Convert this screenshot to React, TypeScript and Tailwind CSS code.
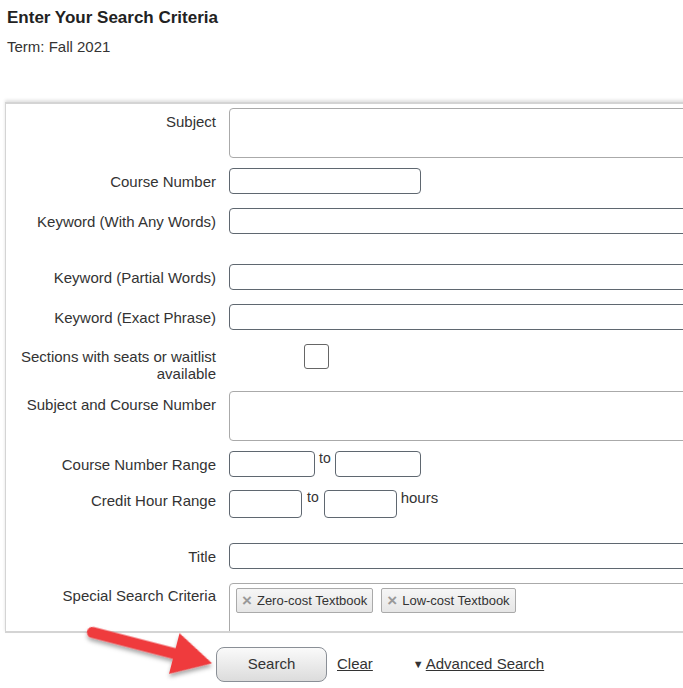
import React from 'react'

const font = { fontFamily: '"Liberation Sans", Arial, sans-serif' }

function Label({ children, top = 0 }: { children: React.ReactNode; top?: number }) {
  return (
    <div className="w-[210px] shrink-0 text-right text-[15px] leading-[17px] text-[#333]" style={{ paddingTop: top }}>
      {children}
    </div>
  )
}

function TextBox({ className = '' }: { className?: string }) {
  return <div className={`h-[26px] rounded-[4px] border border-[#5f6770] bg-white ${className}`} />
}

function Chip({ text }: { text: string }) {
  return (
    <div className="flex h-[25px] items-center gap-[5px] rounded-[2px] border border-[#aaa] bg-gradient-to-b from-[#f6f6f6] to-[#e6e6e6] px-[5px] text-[13px] text-[#333]">
      <span className="text-[17px] font-bold leading-none text-[#999]">×</span>
      <span>{text}</span>
    </div>
  )
}

export default function App() {
  return (
    <div className="relative h-[688px] w-[683px] overflow-hidden bg-white" style={font}>
      <h1 className="ml-[7px] pt-[8px] text-[17px] font-bold leading-[20px] text-[#222]">Enter Your Search Criteria</h1>
      <p className="ml-[7px] mt-[10px] text-[15px] leading-[17px] text-[#333]">Term: Fall 2021</p>

      <div className="ml-[5px] mt-[47px] h-[531px] w-[720px] overflow-hidden border-l border-t-2 border-b-2 border-[#d4d4d4] shadow-[0_-2px_3px_rgba(0,0,0,0.12)]">
        <div className="flex flex-col pt-[4px]">
          <div className="flex gap-[13px]">
            <Label top={5}>Subject</Label>
            <div className="h-[50px] flex-1 rounded-[4px] border border-[#aaa]" />
          </div>

          <div className="mt-[10px] flex items-center gap-[13px]">
            <Label>Course Number</Label>
            <TextBox className="w-[192px]" />
          </div>

          <div className="mt-[14px] flex items-center gap-[13px]">
            <Label>Keyword (With Any Words)</Label>
            <TextBox className="flex-1" />
          </div>

          <div className="mt-[30px] flex items-center gap-[13px]">
            <Label>Keyword (Partial Words)</Label>
            <TextBox className="flex-1" />
          </div>

          <div className="mt-[14px] flex items-center gap-[13px]">
            <Label>Keyword (Exact Phrase)</Label>
            <TextBox className="flex-1" />
          </div>

          <div className="mt-[14px] flex gap-[13px]">
            <Label top={4}>
              Sections with seats or waitlist
              <br />
              available
            </Label>
            <div className="ml-[75px] h-[25px] w-[25px] rounded-[3px] border border-[#666]" />
          </div>

          <div className="mt-[9px] flex gap-[13px]">
            <Label top={5}>Subject and Course Number</Label>
            <div className="h-[50px] flex-1 rounded-[4px] border border-[#aaa]" />
          </div>

          <div className="mt-[10px] flex gap-[13px]">
            <Label top={5}>Course Number Range</Label>
            <div className="flex items-start text-[#333]">
              <TextBox className="w-[86px]" />
              <span className="mx-[4px] text-[14px] leading-[15px]">to</span>
              <TextBox className="w-[86px]" />
            </div>
          </div>

          <div className="mt-[13px] flex gap-[13px]">
            <Label top={2}>Credit Hour Range</Label>
            <div className="flex items-start text-[#333]">
              <TextBox className="h-[28px] w-[73px]" />
              <span className="mx-[5px] text-[14px] leading-[15px]">to</span>
              <TextBox className="h-[28px] w-[73px]" />
              <span className="ml-[4px] text-[15px] leading-[15px]">hours</span>
            </div>
          </div>

          <div className="mt-[25px] flex items-center gap-[13px]">
            <Label>Title</Label>
            <TextBox className="flex-1" />
          </div>

          <div className="mt-[14px] flex gap-[13px]">
            <Label top={4}>Special Search Criteria</Label>
            <div className="flex h-[60px] flex-1 items-start gap-[8px] rounded-[4px] border border-[#aaa] pl-[6px] pt-[4px]">
              <Chip text="Zero-cost Textbook" />
              <Chip text="Low-cost Textbook" />
            </div>
          </div>
        </div>
      </div>

      <div className="ml-[216px] mt-[14px] flex items-center text-[15px] text-[#333]">
        <button className="h-[35px] w-[111px] rounded-[8px] border border-[#8a8f96] bg-gradient-to-b from-[#fafafa] to-[#dcdcdc] text-[15px] text-[#333]">
          Search
        </button>
        <a className="ml-[10px] underline">Clear</a>
        <a className="ml-[40px] flex items-center">
          <span className="mr-[2px] text-[11px]">▼</span>
          <span className="underline">Advanced Search</span>
        </a>
      </div>

      <svg className="absolute left-0 top-[600px]" width="240" height="88" viewBox="0 0 240 88">
        <defs>
          <filter id="sh" x="-20%" y="-40%" width="140%" height="180%">
            <feDropShadow dx="1" dy="3" stdDeviation="2" floodColor="#000" floodOpacity="0.35" />
          </filter>
        </defs>
        <g transform="translate(91 32) rotate(14.5)" filter="url(#sh)">
          <rect x="-4" y="-5.5" width="100" height="11" rx="5.5" fill="#ef3b3e" />
          <polygon points="86,-21 125,0 86,21" fill="#ef3b3e" />
        </g>
      </svg>
    </div>
  )
}
